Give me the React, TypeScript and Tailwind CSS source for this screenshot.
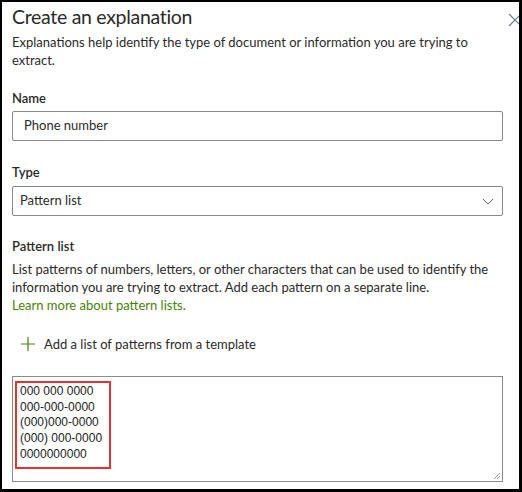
import React from 'react';

const font = { fontFamily: 'Lato, "Noto Sans", sans-serif' };

const App: React.FC = () => {
  return (
    <div className="w-[522px] h-[492px] bg-white">
      <div
        className="relative w-full h-full overflow-hidden border-l-2 border-t-2 border-r-[3px] border-b-[3px] border-black bg-white text-[#2b2a29] pl-[10px] pr-[16px]"
        style={font}
      >
        {/* close */}
        <svg className="absolute right-[-3px] top-[11px] w-[14px] h-[14px]" viewBox="0 0 14 14">
          <path d="M1 1 L13 13 M13 1 L1 13" stroke="#6b7a90" strokeWidth="1.2" fill="none" />
        </svg>

        {/* Header */}
        <h1 className="text-[19.5px] tracking-[-0.3px] leading-[28px] font-normal mt-[1px]">Create an explanation</h1>
        <p className="text-[13px] leading-[18px] mt-[2px]">
          Explanations help identify the type of document or information you are trying to extract.
        </p>

        {/* Name */}
        <label className="block text-[13px] leading-[20px] font-semibold mt-[19px]">Name</label>
        <div className="mt-[3px] h-[30px] border border-[#8a8886] rounded-[2px] flex items-center px-[11px] text-[13px]">
          Phone number
        </div>

        {/* Type */}
        <label className="block text-[13px] leading-[20px] font-semibold mt-[21px]">Type</label>
        <div className="mt-[4px] h-[30px] border border-[#8a8886] rounded-[2px] flex items-center justify-between pl-[7px] pr-[8px] text-[13px]">
          <span>Pattern list</span>
          <svg className="w-[12px] h-[12px]" viewBox="0 0 12 12">
            <path d="M1 4 L6 9 L11 4" stroke="#605e5c" strokeWidth="1" fill="none" />
          </svg>
        </div>

        {/* Pattern list */}
        <label className="block text-[13px] leading-[20px] font-semibold mt-[20px]">Pattern list</label>
        <p className="text-[13px] leading-[18px] mt-[4px]">
          List patterns of numbers, letters, or other characters that can be used to identify the
          information you are trying to extract. Add each pattern on a separate line.
        </p>
        <a className="block text-[13px] leading-[18px] text-[#498205]">Learn more about pattern lists.</a>

        <button className="flex items-center gap-[8px] mt-[20px] ml-[8px] h-[20px] text-[13px] leading-[20px]">
          <svg className="w-[16px] h-[16px]" viewBox="0 0 16 16">
            <path d="M8 1 V15 M1 8 H15" stroke="#498205" strokeWidth="1.2" fill="none" />
          </svg>
          <span>Add a list of patterns from a template</span>
        </button>

        {/* Textarea */}
        <div className="relative mt-[22px] h-[106px] border border-[#8a8a8a] bg-white">
          <div
            className="absolute left-[2px] top-[4px] w-[96px] h-[88px] border-2 border-[#e5322d] pl-[3px] pt-[1px] text-[12px] leading-[15.7px] text-[#222]"
            style={{ fontFamily: '"Liberation Sans", Arial, sans-serif' }}
          >
            <div>000 000 0000</div>
            <div>000-000-0000</div>
            <div>(000)000-0000</div>
            <div>(000) 000-0000</div>
            <div>0000000000</div>
          </div>
          <svg className="absolute right-[1px] bottom-[1px] w-[9px] h-[9px]" viewBox="0 0 9 9">
            <path d="M8 2 L2 8 M8 5 L5 8" stroke="#9a9a9a" strokeWidth="1" fill="none" />
          </svg>
        </div>
      </div>
    </div>
  );
};

export default App;
